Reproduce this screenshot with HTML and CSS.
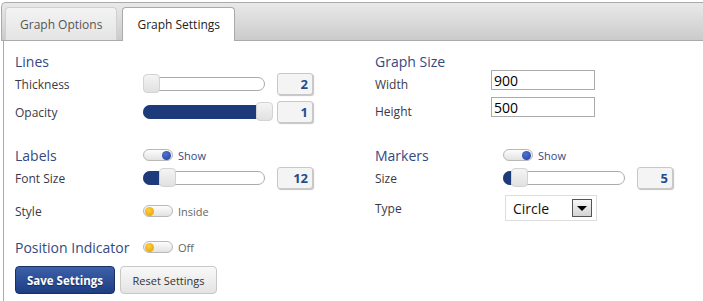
FILE: index.html
```html
<!DOCTYPE html>
<html lang="en">
<head>
    <meta charset="UTF-8">
    <meta name="viewport" content="width=device-width, initial-scale=1.0">
    <title>Graph Settings</title>
    <link rel="stylesheet" href="styles.css">
</head>
<body>
    <div class="tabs">
        <ul class="tab-nav">
            <li class="tab">Graph Options</li>
            <li class="tab active">Graph Settings</li>
        </ul>
        <div class="panel">
            <div class="columns">
                <div class="col col-left">
                    <div class="group">
                        <div class="heading">Lines</div>
                        <div class="field field-thickness">
                            <span class="label">Thickness</span>
                            <div class="slider" style="--v: 0%"><div class="range"></div><span class="handle"></span></div>
                            <span class="value">2</span>
                        </div>
                        <div class="field field-opacity">
                            <span class="label">Opacity</span>
                            <div class="slider" style="--v: 94%"><div class="range"></div><span class="handle"></span></div>
                            <span class="value">1</span>
                        </div>
                    </div>

                    <div class="group group-labels">
                        <div class="heading">
                            <span class="label">Labels</span>
                            <span class="toggle on"><span class="knob"></span></span>
                            <span class="toggle-text on-text">Show</span>
                        </div>
                        <div class="field field-fontsize">
                            <span class="label">Font Size</span>
                            <div class="slider" style="--v: 13.5%"><div class="range"></div><span class="handle"></span></div>
                            <span class="value">12</span>
                        </div>
                        <div class="field field-style">
                            <span class="label">Style</span>
                            <span class="toggle off"><span class="knob"></span></span>
                            <span class="toggle-text">Inside</span>
                        </div>
                    </div>

                    <div class="group group-position">
                        <div class="heading">
                            <span class="label">Position Indicator</span>
                            <span class="toggle off"><span class="knob"></span></span>
                            <span class="toggle-text">Off</span>
                        </div>
                    </div>
                </div>

                <div class="col col-right">
                    <div class="group">
                        <div class="heading">Graph Size</div>
                        <div class="field field-width">
                            <span class="label label-short">Width</span>
                            <input type="text" class="text-input" value="900">
                        </div>
                        <div class="field field-height">
                            <span class="label label-short">Height</span>
                            <input type="text" class="text-input" value="500">
                        </div>
                    </div>

                    <div class="group group-markers">
                        <div class="heading">
                            <span class="label">Markers</span>
                            <span class="toggle on"><span class="knob"></span></span>
                            <span class="toggle-text on-text">Show</span>
                        </div>
                        <div class="field field-size">
                            <span class="label">Size</span>
                            <div class="slider" style="--v: 7%"><div class="range"></div><span class="handle"></span></div>
                            <span class="value">5</span>
                        </div>
                        <div class="field field-type">
                            <span class="label">Type</span>
                            <div class="select">
                                <span>Circle</span>
                                <span class="select-arrow"><span class="caret"></span></span>
                            </div>
                        </div>
                    </div>
                </div>
            </div>

            <div class="actions">
                <button type="button" class="btn btn-save">Save Settings</button>
                <button type="button" class="btn btn-reset">Reset Settings</button>
            </div>
        </div>
    </div>
</body>
</html>
```

FILE: styles.css
```css
* {
    box-sizing: border-box;
}

body {
    margin: 0;
    font-family: "Open Sans", Arial, sans-serif;
    color: #3a3848;
    background-color: #fff;
    overflow: hidden;
}

.tabs {
    margin: 2px 0 0 1px;
    width: 702px;
}

/* tab header */
.tab-nav {
    list-style: none;
    margin: 0;
    padding: 4px 0 0 3px;
    height: 39px;
    display: flex;
    gap: 5px;
    border: 1px solid #aaa;
    border-right: none;
    border-radius: 5px 0 0 0;
    background: linear-gradient(#e9e9e9, #cbcbcb);
}

.tab {
    height: 33px;
    padding: 0 14px;
    display: flex;
    align-items: center;
    border: 1px solid #d0d0d0;
    border-bottom: none;
    border-radius: 4px 4px 0 0;
    background: linear-gradient(#f3f3f3, #e4e4e4);
    font-size: 12px;
    color: #555;
}

.tab.active {
    height: 34px;
    background: #fff;
    border-color: #aaa;
    color: #222;
}

.panel {
    margin-left: 2px;
    border-left: 1px solid #aaa;
    padding: 10px 0 20px 11px;
    height: 262px;
}

.columns {
    display: flex;
}

.col-left {
    width: 360px;
}

.heading {
    display: flex;
    align-items: center;
    height: 20px;
    font-size: 14px;
    color: #34497f;
}

.field {
    display: flex;
    align-items: center;
    height: 22px;
    font-size: 12px;
}

.label {
    width: 128px;
    flex: none;
}

.label-short {
    width: 116px;
    padding-top: 9px;
}

/* vertical rhythm */
.field-thickness { margin-top: 2px; }
.field-opacity { margin-top: 6px; }
.group-labels { margin-top: 22px; }
.field-fontsize { margin-top: 2px; }
.field-style { margin-top: 11px; }
.group-position { margin-top: 15px; }

.field-width { margin-top: -1px; height: 20px; }
.field-height { margin-top: 7px; height: 20px; }
.group-markers { margin-top: 28px; }
.field-size { margin-top: 2px; }
.field-type { margin-top: 6px; height: 26px; }

/* slider */
.slider {
    position: relative;
    width: 122px;
    height: 14px;
    border: 1px solid #aaa;
    border-radius: 7px;
    background: #fff;
}

.range {
    position: absolute;
    left: -1px;
    top: -1px;
    bottom: -1px;
    width: var(--v);
    background: #1d3a7a;
    border-radius: 7px 0 0 7px;
}

.handle {
    position: absolute;
    top: -4px;
    left: var(--v);
    margin-left: -1px;
    width: 17px;
    height: 19px;
    border: 1px solid #d3d3d3;
    border-radius: 4px;
    background: linear-gradient(#f4f4f4, #e1e1e1);
}

.value {
    margin-left: 12px;
    width: 36px;
    height: 22px;
    border: 1px solid #c8c8c8;
    border-radius: 3px;
    background: #f4f4f4;
    box-shadow: 1px 1px 1px #c4c4c4;
    text-align: right;
    padding-right: 4px;
    font-weight: bold;
    font-size: 13px;
    line-height: 20px;
    color: #1f4c8c;
}

/* on/off switch */
.toggle {
    display: flex;
    align-items: center;
    width: 30px;
    height: 12px;
    padding: 0 1px;
    border: 1px solid #b8b8b8;
    border-radius: 6px;
    background: linear-gradient(#fdfdfd, #e2e2e2);
}

.toggle.on {
    justify-content: flex-end;
}

.knob {
    width: 9px;
    height: 9px;
    border-radius: 50%;
    background: radial-gradient(circle at 40% 35%, #4f74d4, #1d3e98);
}

.toggle.off .knob {
    background: radial-gradient(circle at 40% 35%, #ffcf3a, #e49a00);
}

.toggle-text {
    margin-left: 5px;
    font-size: 11px;
    color: #666;
}

.on-text {
    color: #34497f;
}

.text-input {
    width: 104px;
    height: 20px;
    border: 1px solid #aaa;
    padding: 0 2px;
    font-family: "Open Sans", Arial, sans-serif;
    font-size: 14px;
    color: #000;
}

.select {
    display: flex;
    align-items: center;
    justify-content: space-between;
    margin-left: 2px;
    width: 92px;
    height: 26px;
    border: 1px solid #ddd;
    padding: 0 4px 0 7px;
    font-size: 14px;
    color: #111;
}

.select-arrow {
    display: flex;
    align-items: center;
    justify-content: center;
    width: 20px;
    height: 18px;
    border: 1px solid #555;
    background: linear-gradient(#f6f6f6, #d4d4d4);
}

.caret {
    width: 0;
    height: 0;
    border-left: 5px solid transparent;
    border-right: 5px solid transparent;
    border-top: 5px solid #000;
}

.actions {
    display: flex;
    gap: 5px;
    margin-top: 9px;
}

.btn {
    height: 28px;
    border-radius: 4px;
    font-family: "Open Sans", Arial, sans-serif;
    cursor: pointer;
}

.btn-save {
    width: 100px;
    border: 1px solid #1b2f5e;
    background: linear-gradient(#3c60aa, #1e3e83);
    color: #fff;
    font-size: 11.5px;
    font-weight: bold;
    text-shadow: 0 1px 1px rgba(0, 0, 0, 0.4);
}

.btn-reset {
    width: 97px;
    border: 1px solid #c8c8c8;
    background: linear-gradient(#f9f9f9, #e3e3e3);
    color: #333;
    font-size: 11px;
}
```
